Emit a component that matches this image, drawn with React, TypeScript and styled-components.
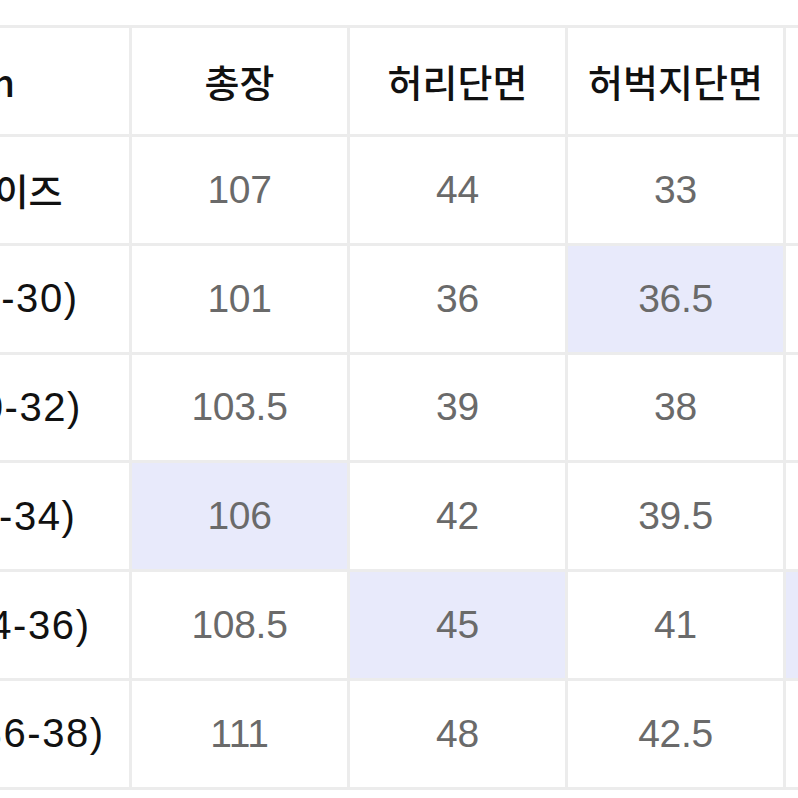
import React from "react";
import styled, { createGlobalStyle } from "styled-components";

const GlobalStyle = createGlobalStyle`
  html, body {
    margin: 0;
    padding: 0;
    background: #ffffff;
    overflow: hidden;
  }
  body {
    width: 798px;
    height: 798px;
  }
`;

const Viewport = styled.div`
  width: 798px;
  height: 798px;
  overflow: hidden;
  background: #ffffff;
`;

const Table = styled.div`
  display: grid;
  grid-template-columns: repeat(5, 215px);
  grid-auto-rows: 105.85px;
  gap: 3px;
  padding: 3px;
  margin-top: 25px;
  margin-left: -89px;
  width: max-content;
  background: #ececec;
`;

const Cell = styled.div<{ $head?: boolean; $hl?: boolean }>`
  display: flex;
  align-items: center;
  justify-content: center;
  background: ${(p) => (p.$hl ? "#e8eafb" : "#ffffff")};
  font-family: ${(p) =>
    p.$head
      ? `"Noto Sans CJK KR", "Noto Sans", sans-serif`
      : `"Liberation Sans", "Noto Sans CJK KR", sans-serif`};
  font-size: ${(p) => (p.$head ? "38px" : "39px")};
  font-weight: ${(p) => (p.$head ? 500 : 400)};
  color: ${(p) => (p.$head ? "#111111" : "#6a6a6a")};
  letter-spacing: ${(p) => (p.$head ? "0" : "-0.3px")};
  white-space: nowrap;
`;

const CornerCell = styled(Cell)`
  justify-content: flex-end;
  padding-right: 114px;
`;

const LabelCell = styled.div<{ $korean?: boolean }>`
  display: flex;
  align-items: center;
  justify-content: center;
  padding-right: ${(p) => (p.$korean ? "20px" : "54px")};
  background: #ffffff;
  font-family: ${(p) =>
    p.$korean
      ? `"Noto Sans CJK KR", "Noto Sans", sans-serif`
      : `"Liberation Sans", "Noto Sans CJK KR", sans-serif`};
  font-size: ${(p) => (p.$korean ? "37px" : "40px")};
  font-weight: 500;
  color: #111111;
  letter-spacing: ${(p) => (p.$korean ? "0" : "1.6px")};
  white-space: nowrap;
`;

const headers = ["총장", "허리단면", "허벅지단면", "밑단단면"];

type Row = { label: string; korean?: boolean; values: string[]; hl: number[] };

const rows: Row[] = [
  { label: "사이즈", korean: true, values: ["107", "44", "33", "21"], hl: [] },
  { label: "S(28-30)", values: ["101", "36", "36.5", "18"], hl: [2] },
  { label: "M(30-32)", values: ["103.5", "39", "38", "19"], hl: [] },
  { label: "L(32-34)", values: ["106", "42", "39.5", "20"], hl: [0] },
  { label: "XL(34-36)", values: ["108.5", "45", "41", "21"], hl: [1, 3] },
  { label: "XXL(36-38)", values: ["111", "48", "42.5", "22"], hl: [] },
];

export default function App() {
  return (
    <>
      <GlobalStyle />
      <Viewport>
        <Table>
          <CornerCell $head>cm</CornerCell>
          {headers.map((h) => (
            <Cell key={h} $head>
              {h}
            </Cell>
          ))}
          {rows.map((r) => (
            <React.Fragment key={r.label}>
              <LabelCell $korean={r.korean}>{r.label}</LabelCell>
              {r.values.map((v, i) => (
                <Cell key={i} $hl={r.hl.includes(i)}>
                  {v}
                </Cell>
              ))}
            </React.Fragment>
          ))}
        </Table>
      </Viewport>
    </>
  );
}
